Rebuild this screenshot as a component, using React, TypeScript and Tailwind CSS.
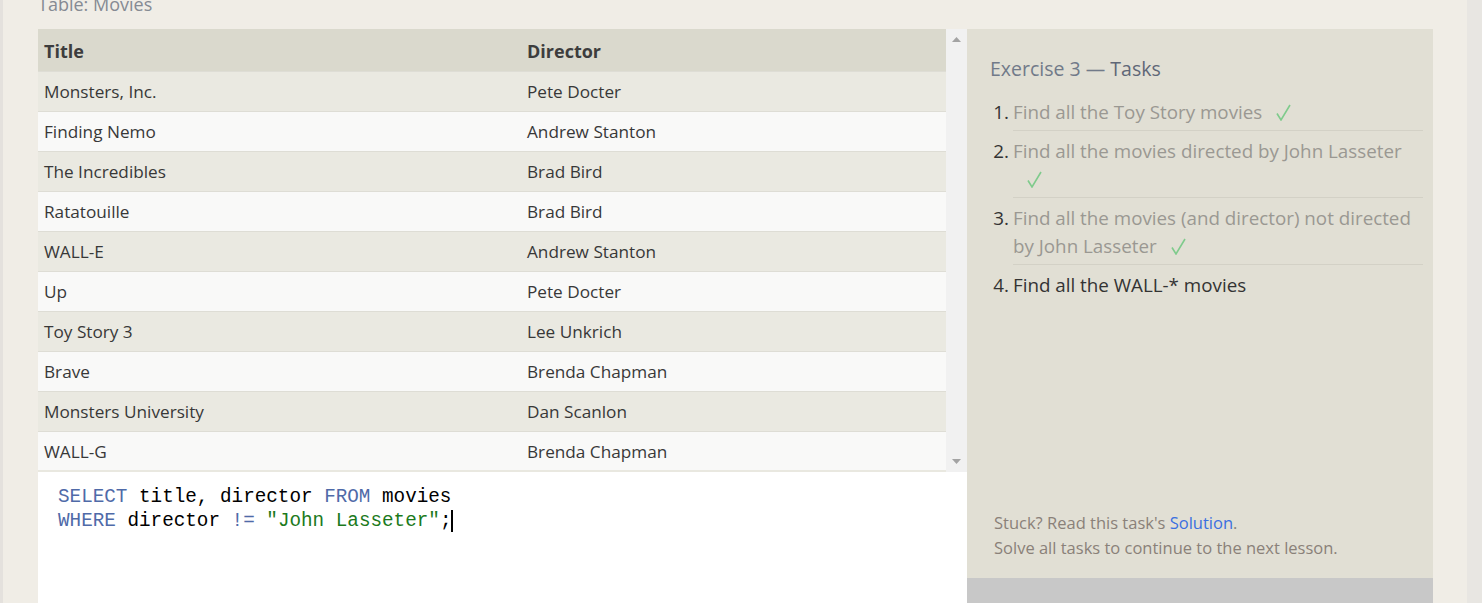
import React from "react";

const movies = [
  ["Monsters, Inc.", "Pete Docter"],
  ["Finding Nemo", "Andrew Stanton"],
  ["The Incredibles", "Brad Bird"],
  ["Ratatouille", "Brad Bird"],
  ["WALL-E", "Andrew Stanton"],
  ["Up", "Pete Docter"],
  ["Toy Story 3", "Lee Unkrich"],
  ["Brave", "Brenda Chapman"],
  ["Monsters University", "Dan Scanlon"],
  ["WALL-G", "Brenda Chapman"],
  ["WALL-H", "Brenda Chapman"],
];

const tasks = [
  { text: "Find all the Toy Story movies", done: true },
  { text: "Find all the movies directed by John Lasseter", done: true },
  { text: "Find all the movies (and director) not directed by John Lasseter", done: true },
  { text: "Find all the WALL-* movies", done: false },
];

const Check = () => (
  <svg className="ml-[14px] inline-block align-[-2px]" width="15" height="17" viewBox="0 0 15 17">
    <path d="M1 9.5L5 16L14 1" fill="none" stroke="#7fcb8c" strokeWidth="1.6" />
  </svg>
);

const App = () => {
  return (
    <div className="flex h-[603px] w-full overflow-hidden bg-[#f0ede6] font-['Open_Sans',sans-serif]">
      {/* left edge */}
      <div className="w-[3px] shrink-0 bg-[#e4e1dd]"></div>

      <div className="flex-1 flex flex-col pl-[35px]">
        {/* caption */}
        <div className="h-[29px] overflow-hidden">
          <p className="-mt-[8px] text-[18px] leading-[24px] text-[#858a93]">Table: Movies</p>
        </div>

        <div className="flex flex-1 min-h-0">
          {/* table + editor */}
          <div className="w-[929px] flex flex-col">
            <div className="flex h-[443px] bg-[#f1f1f1]">
              <div className="w-[908px] overflow-hidden border-b-2 border-[#e9e8e0]">
                <div className="flex h-[42px] items-center pt-[3px] bg-[#dad9cd] text-[18px] font-bold text-[#3d3d3d]">
                  <div className="w-[489px] pl-[6px]">Title</div>
                  <div className="flex-1">Director</div>
                </div>
                {movies.map(([title, director], i) => (
                  <div
                    key={title}
                    className={
                      "flex h-[40px] items-center pt-[1px] border-t border-[#deddd5] text-[17.2px] text-[#383838] " +
                      (i % 2 === 0 ? "bg-[#eae9e1]" : "bg-[#f9f9f8]")
                    }
                  >
                    <div className="w-[489px] pl-[6px]">{title}</div>
                    <div className="flex-1">{director}</div>
                  </div>
                ))}
              </div>
              {/* scrollbar */}
              <div className="w-[21px] flex flex-col items-center justify-between py-[8px]">
                <svg width="9" height="5" viewBox="0 0 9 5"><path d="M4.5 0L9 5H0z" fill="#a3a3a3" /></svg>
                <svg width="9" height="5" viewBox="0 0 9 5"><path d="M0 0h9L4.5 5z" fill="#a3a3a3" /></svg>
              </div>
            </div>
            {/* editor */}
            <div className="flex-1 bg-white pl-[20px] pt-[13px] font-['Liberation_Mono',monospace] text-[19.3px] leading-[24px] text-black">
              <div>
                <span className="text-[#4f6aa8]">SELECT</span> title, director <span className="text-[#4f6aa8]">FROM</span> movies
              </div>
              <div className="flex items-center">
                <span className="whitespace-pre">
                  <span className="text-[#4f6aa8]">WHERE</span> director <span className="text-[#4f6aa8]">!=</span>{" "}
                  <span className="text-[#1c7a1c]">"John Lasseter"</span>;
                </span>
                <span className="inline-block h-[22px] w-[2px] bg-black"></span>
              </div>
            </div>
          </div>

          {/* tasks panel */}
          <div className="w-[466px] flex flex-col">
            <div className="flex-1 flex flex-col justify-between bg-[#e1dfd4] pt-[26px] pb-[18px] pr-[10px]">
              <div className="pl-[23px]">
                <h2 className="text-[19.5px] leading-[28px] text-[#717a89]">
                  Exercise 3 — <span className="text-[#5f6777]">Tasks</span>
                </h2>
                <ol className="mt-[9px]">
                  {tasks.map((t, i) => (
                    <li key={i} className="flex text-[18.8px] leading-[28px]">
                      <span className="w-[23px] shrink-0 pt-[6px] pr-[4px] text-right text-[#333]">{i + 1}.</span>
                      <div
                        className={
                          "flex-1 pt-[6px] pb-[4px] " +
                          (i < tasks.length - 1 ? "border-b border-[#d3d1c6] " : "") +
                          (t.done ? "text-[#9a9892]" : "text-[#333]")
                        }
                      >
                        {t.text}
                        {t.done && <Check />}
                      </div>
                    </li>
                  ))}
                </ol>
              </div>
              <div className="pl-[27px] text-[16.5px] leading-[25px] text-[#8a8179]">
                <p>
                  Stuck? Read this task's <span className="text-[#3b6fe0]">Solution</span>.
                </p>
                <p>Solve all tasks to continue to the next lesson.</p>
              </div>
            </div>
            <div className="h-[25px] bg-[#c8c8c8]"></div>
          </div>
        </div>
      </div>

      {/* page scrollbar */}
      <div className="w-[15px] shrink-0 bg-[#e8e6e2]"></div>
    </div>
  );
};

export default App;
